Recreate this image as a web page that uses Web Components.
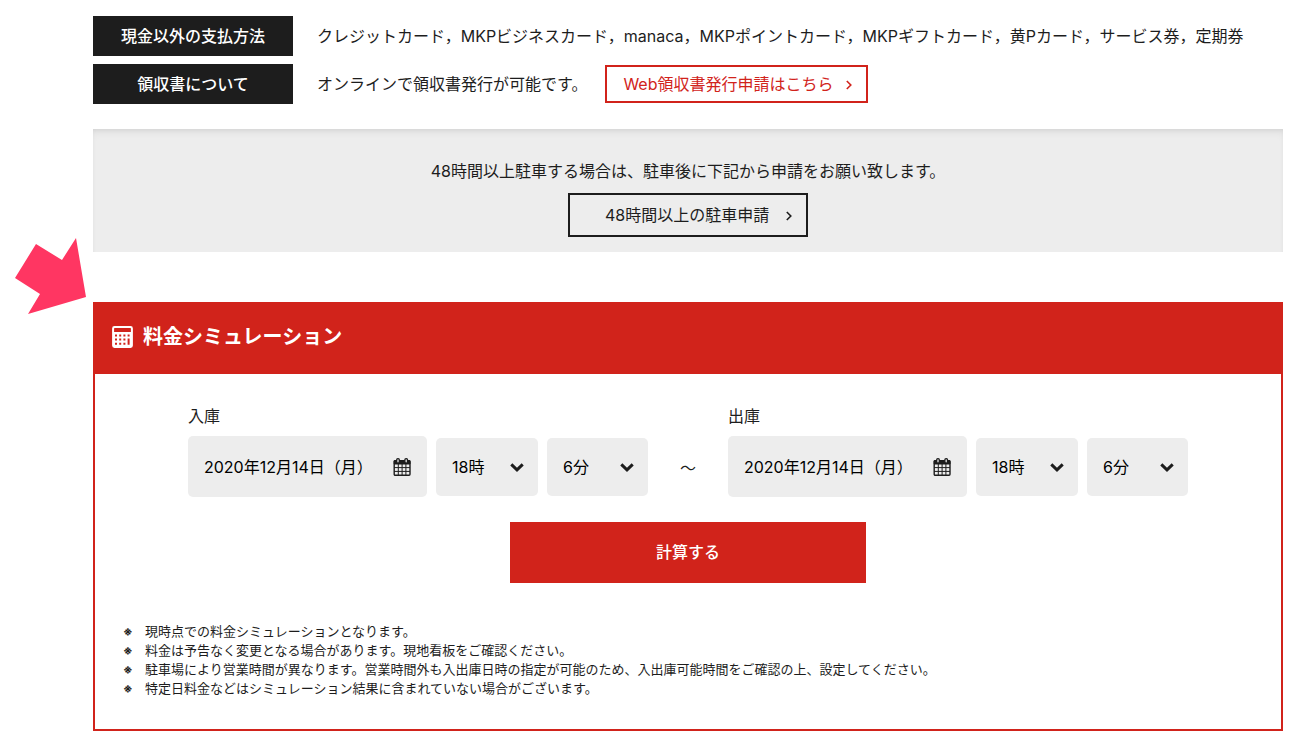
<!DOCTYPE html>
<html lang="ja">
<head>
<meta charset="utf-8">
<meta name="viewport" content="width=device-width, initial-scale=1">
<title>料金シミュレーション</title>
<style>
  :root {
    --ink: #1d1d1d;
    --red: #d1231b;
    --grey: #ededed;
  }
  body {
    margin: 0;
    background: #fff;
    color: var(--ink);
    font: 16px/24px Inter, "Noto Sans CJK JP", sans-serif;
  }
</style>
</head>
<body>
<parking-page></parking-page>

<script>
const define = (name, html, setup) => {
  const template = document.createElement('template');
  template.innerHTML = html;
  customElements.define(name, class extends HTMLElement {
    constructor() {
      super();
      this.attachShadow({ mode: 'open' }).append(template.content.cloneNode(true));
    }
    connectedCallback() {
      if (setup) setup(this, this.shadowRoot);
    }
  });
};

define('info-row', `
  <style>
    :host { display: flex; align-items: center; gap: 24px; min-height: 40px; }
    .name { flex: 0 0 200px; box-sizing: border-box; padding: 8px; background: var(--ink); color: #fff; font-weight: 500; text-align: center; }
    .value { display: flex; flex-wrap: wrap; align-items: center; gap: 18px; }
  </style>
  <div class="name"><slot name="name"></slot></div>
  <div class="value"><slot></slot></div>
`);

define('outline-link', `
  <style>
    :host { display: inline-block; color: var(--red); }
    :host([wide]) { color: var(--ink); width: 240px; }
    a { display: flex; align-items: center; justify-content: space-between; gap: 12px; box-sizing: border-box;
        padding: 5px 14px 5px 16px; border: 2px solid; color: inherit; text-decoration: none; }
    :host([wide]) a { padding: 8px 14px 8px 35px; }
    svg { flex: none; display: block; margin-top: 2px; }
  </style>
  <a href="#"><slot></slot>
    <svg width="6" height="10" viewBox="0 0 6 10" fill="none" stroke="currentColor" stroke-width="1.6" aria-hidden="true"><path d="M.8 1 4.8 5l-4 4"/></svg>
  </a>
`);

define('notice-box', `
  <style>
    :host { display: flex; flex-direction: column; align-items: center; gap: 10px; padding: 30px 16px 15px;
            background: var(--grey); box-shadow: inset 0 6px 8px -4px rgba(0,0,0,.09), inset 0 2px 3px rgba(0,0,0,.03); }
    p { margin: 0; }
  </style>
  <p><slot></slot></p>
  <slot name="action"></slot>
`);

define('date-field', `
  <style>
    :host { display: block; }
    .box { display: flex; align-items: center; height: 61px; box-sizing: border-box; padding: 0 16px; border-radius: 5px; background: var(--grey); }
    input { flex: 1; min-width: 0; padding: 0; border: 0; background: none; color: #000; font: inherit; outline: 0; }
    button { display: block; padding: 0; border: 0; background: none; color: var(--ink); }
    svg { display: block; }
  </style>
  <div class="box">
    <input type="text" readonly>
    <button type="button" aria-label="カレンダー">
      <svg width="18" height="18" viewBox="0 0 18 18" fill="none" stroke="currentColor">
        <rect x="1.2" y="2.7" width="15.8" height="14.6" rx="1" stroke-width="1.4"/>
        <path d="M1.2 2.7H17V6H1.2z" fill="currentColor"/>
        <path d="M5.3 6v11M9.1 6v11M12.9 6v11M1 9.6h16M1 13.4h16" stroke-width="1"/>
        <rect x="3.6" y=".6" width="2.8" height="4.4" rx="1.3" fill="#c4c4c4" stroke-width="1.2"/>
        <rect x="11.8" y=".6" width="2.8" height="4.4" rx="1.3" fill="#c4c4c4" stroke-width="1.2"/>
      </svg>
    </button>
  </div>
`, (host, root) => {
  const input = root.querySelector('input');
  input.value = host.getAttribute('value');
  input.setAttribute('aria-label', host.getAttribute('label'));
});

define('select-field', `
  <style>
    :host { display: grid; grid-template-columns: minmax(0, 1fr); align-items: center; }
    select, svg { grid-area: 1 / 1; }
    select { appearance: none; width: 100%; height: 58px; box-sizing: border-box; padding: 0 32px 0 16px; border: 0; border-radius: 5px;
             background: var(--grey); color: #000; font: inherit; }
    svg { justify-self: end; margin: 2px 14px 0 0; pointer-events: none; z-index: 1; }
  </style>
  <select></select>
  <svg width="14" height="9" viewBox="0 0 14 9" fill="none" stroke="#1d1d1d" stroke-width="3" aria-hidden="true"><path d="m1.3 1.3 5.7 5.5 5.7-5.5"/></svg>
`, (host, root) => {
  const select = root.querySelector('select');
  const unit = host.getAttribute('unit');
  select.setAttribute('aria-label', host.getAttribute('label'));
  for (let n = 0; n < +host.getAttribute('count'); n++) {
    select.add(new Option(n + unit, n));
  }
  select.value = host.getAttribute('value');
});

define('time-picker', `
  <style>
    :host { display: block; flex: 0 1 460px; }
    fieldset { margin: 0; padding: 0; border: 0; min-width: 0; }
    legend { padding: 0; margin-bottom: 8px; }
    .fields { display: grid; grid-template-columns: minmax(0, 239fr) minmax(0, 102fr) minmax(0, 101fr); align-items: center; gap: 9px; }
  </style>
  <fieldset>
    <legend><slot></slot></legend>
    <div class="fields">
      <date-field label="日付" value="2020年12月14日（月）"></date-field>
      <select-field label="時" unit="時" count="24" value="18"></select-field>
      <select-field label="分" unit="分" count="60" value="6"></select-field>
    </div>
  </fieldset>
`);

define('note-list', `
  <style>
    :host { display: block; font-size: 13px; line-height: 19px; }
    ul { margin: 0; padding: 0; list-style: none; }
    li { display: flex; }
    li::before { content: "※"; flex: 0 0 22px; font-size: 12px; font-weight: 700; }
  </style>
  <ul>
    <li>現時点での料金シミュレーションとなります。</li>
    <li>料金は予告なく変更となる場合があります。現地看板をご確認ください。</li>
    <li>駐車場により営業時間が異なります。営業時間外も入出庫日時の指定が可能のため、入出庫可能時間をご確認の上、設定してください。</li>
    <li>特定日料金などはシミュレーション結果に含まれていない場合がございます。</li>
  </ul>
`);

define('pointer-arrow', `
  <style>
    :host { display: block; }
    svg { display: block; }
  </style>
  <svg width="71" height="76" viewBox="0 0 71 76" aria-hidden="true"><path fill="#ff3662" d="M21 6 47 22 61 0l10 59-58 17 12-20L0 40z"/></svg>
`);

define('fee-simulator', `
  <style>
    :host { display: block; position: relative; border: 2px solid var(--red); }
    pointer-arrow { position: absolute; left: -80px; top: -66px; }
    header { display: flex; align-items: center; gap: 10px; height: 70px; box-sizing: border-box; padding: 0 17px 4px; background: var(--red); color: #fff; }
    h2 { margin: 0; font-size: 20px; font-weight: 700; line-height: 30px; }
    form { display: flex; flex-direction: column; align-items: center; gap: 25px; padding: 30px 0 39px; }
    .range { display: flex; align-items: flex-end; justify-content: center; align-self: stretch; }
    .tilde { flex: 0 0 80px; text-align: center; line-height: 57px; }
    .submit { width: 30%; height: 61px; padding: 0 0 2px; border: 0; background: var(--red); color: #fff; font: inherit; font-weight: 500; }
    note-list { padding: 0 28px 31px; }
  </style>
  <pointer-arrow></pointer-arrow>
  <header>
    <svg width="21" height="22" viewBox="0 0 21 22" aria-hidden="true">
      <rect x="1.1" y="1.1" width="18.8" height="19.8" rx="1.4" fill="none" stroke="#fff" stroke-width="2"/>
      <path fill="#fff" d="M1 6h19v15H1z"/>
      <g fill="#d1231b">
        <path d="M3 8.4h2v2H3zM7.2 8.4h2v2h-2zM11.4 8.4h2v2h-2zM15.6 8.4h2v2h-2zM3 12.6h2v2H3zM7.2 12.6h2v2h-2zM11.4 12.6h2v2h-2zM3 16.8h2v2H3zM7.2 16.8h2v2h-2zM11.4 16.8h2v2h-2zM15.6 12.6h2v6.2h-2z"/>
      </g>
    </svg>
    <h2>料金シミュレーション</h2>
  </header>
  <form>
    <div class="range">
      <time-picker>入庫</time-picker>
      <span class="tilde">〜</span>
      <time-picker>出庫</time-picker>
    </div>
    <button class="submit" type="button">計算する</button>
  </form>
  <note-list></note-list>
`);

define('parking-page', `
  <style>
    :host { display: block; padding: 16px 27px 16px 93px; }
    .info { display: grid; gap: 8px; }
    notice-box { margin: 25px 0 50px; }
  </style>
  <main>
    <div class="info">
      <info-row><span slot="name">現金以外の支払方法</span>クレジットカード，MKPビジネスカード，manaca，MKPポイントカード，MKPギフトカード，黄Pカード，サービス券，定期券</info-row>
      <info-row><span slot="name">領収書について</span><span>オンラインで領収書発行が可能です。</span><outline-link>Web領収書発行申請はこちら</outline-link></info-row>
    </div>
    <notice-box>48時間以上駐車する場合は、駐車後に下記から申請をお願い致します。<outline-link wide slot="action">48時間以上の駐車申請</outline-link></notice-box>
    <fee-simulator></fee-simulator>
  </main>
`);
</script>
</body>
</html>
